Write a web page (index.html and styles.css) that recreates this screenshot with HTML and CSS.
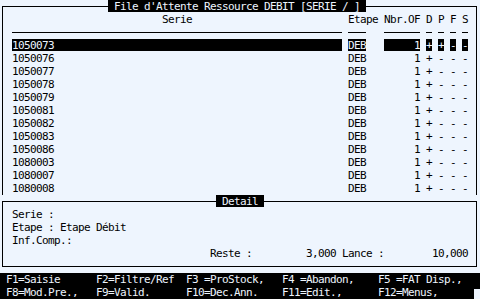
FILE: index.html
```
<!DOCTYPE html>
<html lang="fr">
<head>
    <meta charset="UTF-8">
    <title>File d'Attente Ressource DEBIT</title>
    <link rel="stylesheet" href="styles.css">
</head>
<body>
    <div class="screen">
        <!-- Liste des series -->
        <div class="frame-top list-top">
            <span class="edge edge-left"></span>
            <span class="frame-title list-title">File d'Attente Ressource DEBIT [SERIE / ]</span>
            <span class="edge edge-right"></span>
        </div>
        <div class="list-body">
            <div class="cols head">
                <span class="c-serie">Serie</span><span>Etape</span><span class="c-num">Nbr.OF</span><span>D</span><span>P</span><span>F</span><span>S</span>
            </div>
            <div class="cols rule">
                <span></span><span></span><span class="c-num"></span><span></span><span></span><span></span><span></span>
            </div>
            <div class="cols sel"><span>1050073</span><span>DEB</span><span class="c-num">1</span><span>+</span><span>+</span><span>-</span><span>-</span></div>
            <div class="cols"><span>1050076</span><span>DEB</span><span class="c-num">1</span><span>+</span><span>-</span><span>-</span><span>-</span></div>
            <div class="cols"><span>1050077</span><span>DEB</span><span class="c-num">1</span><span>+</span><span>-</span><span>-</span><span>-</span></div>
            <div class="cols"><span>1050078</span><span>DEB</span><span class="c-num">1</span><span>+</span><span>-</span><span>-</span><span>-</span></div>
            <div class="cols"><span>1050079</span><span>DEB</span><span class="c-num">1</span><span>+</span><span>-</span><span>-</span><span>-</span></div>
            <div class="cols"><span>1050081</span><span>DEB</span><span class="c-num">1</span><span>+</span><span>-</span><span>-</span><span>-</span></div>
            <div class="cols"><span>1050082</span><span>DEB</span><span class="c-num">1</span><span>+</span><span>-</span><span>-</span><span>-</span></div>
            <div class="cols"><span>1050083</span><span>DEB</span><span class="c-num">1</span><span>+</span><span>-</span><span>-</span><span>-</span></div>
            <div class="cols"><span>1050086</span><span>DEB</span><span class="c-num">1</span><span>+</span><span>-</span><span>-</span><span>-</span></div>
            <div class="cols"><span>1080003</span><span>DEB</span><span class="c-num">1</span><span>+</span><span>-</span><span>-</span><span>-</span></div>
            <div class="cols"><span>1080007</span><span>DEB</span><span class="c-num">1</span><span>+</span><span>-</span><span>-</span><span>-</span></div>
            <div class="cols"><span>1080008</span><span>DEB</span><span class="c-num">1</span><span>+</span><span>-</span><span>-</span><span>-</span></div>
        </div>

        <!-- Detail -->
        <div class="frame-top detail-top">
            <span class="edge edge-left"></span>
            <span class="frame-title detail-title">Detail</span>
            <span class="edge edge-right"></span>
        </div>
        <div class="detail-body">
            <p class="line">Serie :</p>
            <p class="line">Etape : Etape Débit</p>
            <p class="line">Inf.Comp.:</p>
            <div class="totals">
                <span class="t-label">Reste :</span><span class="t-num">3,000</span><span class="t-label lance">Lance :</span><span class="t-num">10,000</span>
            </div>
        </div>

        <!-- Touches de fonction -->
        <div class="keys">
            <span>F1=Saisie</span><span>F2=Filtre/Ref</span><span>F3 =ProStock,</span><span>F4 =Abandon,</span><span>F5 =FAT Disp.,</span><span></span>
            <span>F8=Mod.Pre.,</span><span>F9=Valid.</span><span>F10=Dec.Ann.</span><span>F11=Edit.,</span><span>F12=Menus,</span><span class="cursor"></span>
        </div>
    </div>
</body>
</html>
```

FILE: styles.css
```
/* Terminal screen */
body {
    margin: 0;
    background: #eef5fe;
}

.screen {
    width: 480px;
    height: 299px;
    overflow: hidden;
    font-family: "DejaVu Sans Mono", "Liberation Mono", monospace;
    font-size: 11px;
    letter-spacing: -0.62px;
    line-height: 13px;
    color: #000;
}

/* Box top line with inverted title */
.frame-top {
    display: flex;
    height: 13px;
}

.edge {
    box-sizing: border-box;
    height: 7px;
    margin-top: 6px;
    border-top: 1px solid #000;
}

.edge-left {
    margin-left: 2px;
    border-left: 1px solid #000;
}

.edge-right {
    flex: 1;
    margin-right: 3px;
    border-right: 1px solid #000;
}

.list-top .edge-left {
    width: 106px;
}

.detail-top .edge-left {
    width: 214px;
}

.frame-title {
    box-sizing: border-box;
    height: 12px;
    padding-left: 6px;
    background: #000;
    color: #eef5fe;
    white-space: pre;
}

.list-title {
    width: 258px;
}

.detail-title {
    width: 48px;
}

/* Series list */
.list-body {
    margin: 0 3px 0 2px;
    padding: 0 8px 0 9px;
    border-left: 1px solid #000;
    border-right: 1px solid #000;
}

.cols {
    display: grid;
    grid-template-columns: 330px 18px 6px 36px 6px 6px 6px 6px;
    column-gap: 6px;
    height: 13px;
}

.cols > span {
    white-space: pre;
}

.cols .c-num {
    grid-column: 4;
    text-align: right;
}

.head .c-serie {
    text-align: center;
}

.rule > span {
    height: 6px;
    border-bottom: 1px solid #000;
}

.sel > span {
    height: 12px;
    background: #000;
    color: #eef5fe;
}

/* Detail box */
.detail-body {
    margin: 0 3px 0 2px;
    padding: 0 8px 6px 9px;
    border: 1px solid #000;
    border-top: none;
}

.line {
    margin: 0;
    height: 13px;
    white-space: pre;
}

.totals {
    display: flex;
    justify-content: flex-end;
    height: 13px;
}

.totals span {
    white-space: pre;
}

.t-label {
    width: 42px;
}

.t-num {
    width: 84px;
    text-align: right;
}

.lance {
    margin-left: 6px;
}

/* Function keys bar */
.keys {
    display: grid;
    grid-template-columns: 90px 90px 96px 96px 96px 6px;
    grid-auto-rows: 13px;
    margin-top: 6px;
    padding-left: 6px;
    background: #000;
    color: #eef5fe;
}

.keys span {
    white-space: pre;
}

.keys .cursor {
    margin-top: 3px;
    background: #eef5fe;
}
```
